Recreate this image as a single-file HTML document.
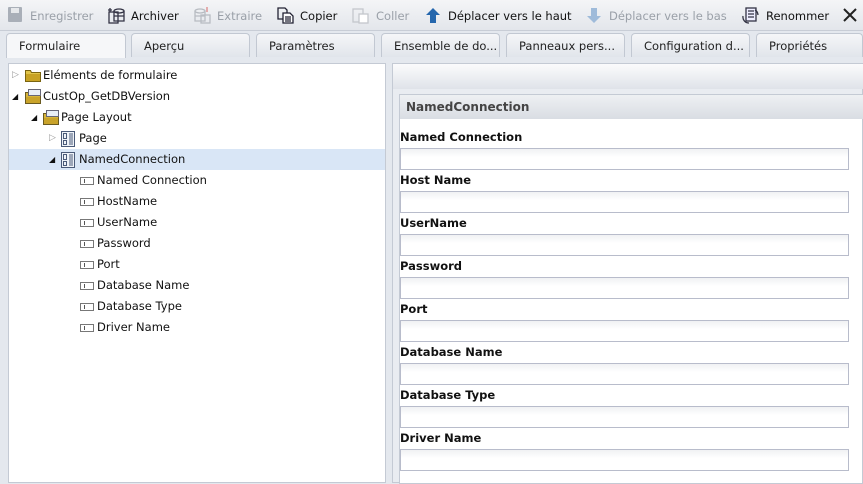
<!DOCTYPE html>
<html><head><style>
*{box-sizing:border-box;margin:0;padding:0}
body{width:863px;height:480px;overflow:hidden;background:#e4e8ee;font-family:"DejaVu Sans","Liberation Sans",sans-serif;font-size:11.5px;color:#111;position:relative}
.a{position:absolute;white-space:nowrap}
.tb{left:0;top:0;width:863px;height:31px;background:linear-gradient(#f4f5f7,#e3e6eb);border-bottom:1px solid #c8cdd6}
.tb span,.tb svg{position:absolute;top:9px}
.tb svg{top:7px}
.dis{color:#9aa0a8}
.tab{position:absolute;top:33px;height:24px;border:1px solid #c2c8d2;border-bottom:none;border-radius:4px 4px 0 0;background:linear-gradient(#f5f6f8,#e1e5eb);padding:5px 0 0 12px;color:#222}
.tab.on{background:#f6f7f9;height:25px}
.tree{left:8px;top:63px;width:378px;height:420px;background:#fff;border:1px solid #c4cad4}
.row{position:absolute;left:0;width:376px;height:21px;line-height:21px}
.row span,.row svg{position:absolute}
.fi{position:absolute;width:14px;height:8px;border:1px solid #777}
.fi:after{content:"";position:absolute;left:3px;top:1px;width:1px;height:4px;background:#555}
.rp{left:392px;top:63px;width:471px;height:420px;background:#e9ecf1;border:1px solid #c4cad4}
.hdr{left:393px;top:64px;width:470px;height:25px;background:linear-gradient(#fbfbfc,#dfe3e9)}
.inner{left:399px;top:94px;width:464px;height:390px;background:#fff;border:1px solid #c4cad4}
.title{left:400px;top:95px;width:463px;height:24px;background:linear-gradient(#eef0f3,#d9dde3);font-weight:bold;color:#444;padding:5px 0 0 6px;font-size:12px}
.lbl{position:absolute;left:400px;font-weight:bold;font-size:11.5px}
.inp{position:absolute;left:400px;width:449px;height:22px;border:1px solid #b8bccb;background:linear-gradient(#f0f1f3,#fff 40%)}
</style></head><body>
<div class="a tb">
<svg style="left:8px" width="14" height="15"><rect x="0" y="0" width="14" height="15" rx="1" fill="#a9afb8"/><rect x="3" y="1" width="8" height="5" fill="#e6e8eb"/></svg>
<span class="dis" style="left:30px">Enregistrer</span>
<svg style="left:108px" width="17" height="17" fill="none" stroke="#334" stroke-width="1.3"><rect x="1" y="5" width="9" height="11"/><ellipse cx="11" cy="4" rx="5" ry="2"/><path d="M6 4v10h10V4M6 9h10M2 1v4M0 3h4" /></svg>
<span style="left:131px">Archiver</span>
<svg style="left:194px" width="17" height="17" fill="none" stroke="#b8bcc2" stroke-width="1.3"><ellipse cx="6" cy="4" rx="5" ry="2"/><path d="M1 4v10h10V4M1 9h10"/><rect x="7" y="8" width="9" height="8"/><path d="M13 0v5" stroke="#d88"/></svg>
<span class="dis" style="left:217px">Extraire</span>
<svg style="left:277px" width="17" height="17" fill="none" stroke="#223" stroke-width="1.3"><path d="M1 1h7l2 2v9H1z"/><path d="M6 6h7l3 3v7H6z" fill="#fff"/><path d="M8 10h6M8 12h6M8 14h6"/></svg>
<span style="left:300px">Copier</span>
<svg style="left:352px" width="17" height="17" fill="none" stroke="#c4c7cc" stroke-width="1.3"><rect x="1" y="2" width="10" height="13"/><rect x="7" y="7" width="9" height="9" fill="#fff"/></svg>
<span class="dis" style="left:376px">Coller</span>
<svg style="left:425px" width="16" height="17"><path d="M8 1L1 8h4v8h6V8h4z" fill="#2466ad"/></svg>
<span style="left:448px">Déplacer vers le haut</span>
<svg style="left:586px" width="16" height="17"><path d="M8 16L1 9h4V1h6v8h4z" fill="#9fbbda"/></svg>
<span class="dis" style="left:609px">Déplacer vers le bas</span>
<svg style="left:742px" width="17" height="17" fill="none" stroke="#334" stroke-width="1.3"><rect x="4" y="1" width="10" height="13" fill="#eef"/><path d="M6 4h6M6 7h6M6 10h6"/><path d="M1 9a6 6 0 0 0 6 7M16 8a6 6 0 0 0-3-5"/></svg>
<span style="left:766px">Renommer</span>
<svg style="left:843px;top:8px" width="14" height="14" stroke="#222" stroke-width="2"><path d="M1 1L13 13M13 1L1 13"/></svg>
</div>
<div class="tab on" style="left:6px;width:120px">Formulaire</div>
<div class="tab" style="left:131px;width:119px">Aperçu</div>
<div class="tab" style="left:256px;width:119px">Paramètres</div>
<div class="tab" style="left:381px;width:119px">Ensemble de do...</div>
<div class="tab" style="left:506px;width:119px">Panneaux pers...</div>
<div class="tab" style="left:631px;width:119px">Configuration d...</div>
<div class="tab" style="left:756px;width:107px">Propriétés</div>
<div class="a tree">
<div class="row" style="top:1px"><span style="left:3px;color:#999;font-size:9px">▷</span><svg style="left:16px;top:4px" width="16" height="13"><path d="M0.5 1.5h5l1 2h9v9H0.5z" fill="#e0c44a" stroke="#7a6410"/><rect x="1" y="5" width="14" height="7" fill="#c8a224"/></svg><span style="left:34px">Eléments de formulaire</span></div>
<div class="row" style="top:22px"><span style="left:3px;font-size:8px">◢</span><svg style="left:16px;top:3px" width="17" height="15"><path d="M0.5 3.5h15v11H0.5z" fill="#d6b43a" stroke="#6a5a20"/><rect x="3.5" y="0.5" width="12" height="6" fill="#e8eef6" stroke="#667"/><rect x="1" y="8" width="14" height="6" fill="#c9a32a"/></svg><span style="left:34px">CustOp_GetDBVersion</span></div>
<div class="row" style="top:43px"><span style="left:22px;font-size:8px">◢</span><svg style="left:34px;top:3px" width="17" height="15"><path d="M0.5 3.5h15v11H0.5z" fill="#d6b43a" stroke="#6a5a20"/><rect x="3.5" y="0.5" width="12" height="6" fill="#e8eef6" stroke="#667"/><rect x="1" y="8" width="14" height="6" fill="#c9a32a"/></svg><span style="left:52px">Page Layout</span></div>
<div class="row" style="top:64px"><span style="left:40px;color:#999;font-size:9px">▷</span><svg style="left:52px;top:3px" width="14" height="16" fill="#eef2f8" stroke="#4a5a78"><rect x="0.5" y="0.5" width="13" height="15"/><rect x="2.5" y="2.5" width="3" height="5"/><rect x="2.5" y="9.5" width="3" height="4"/><path d="M8 3h4M8 5h4M8 7h4M8 9h4M8 11h4M8 13h4"/></svg><span style="left:70px">Page</span></div>
<div class="row" style="top:85px;background:#d9e6f6"><span style="left:40px;font-size:8px">◢</span><svg style="left:52px;top:3px" width="14" height="16" fill="#eef2f8" stroke="#4a5a78"><rect x="0.5" y="0.5" width="13" height="15"/><rect x="2.5" y="2.5" width="3" height="5"/><rect x="2.5" y="9.5" width="3" height="4"/><path d="M8 3h4M8 5h4M8 7h4M8 9h4M8 11h4M8 13h4"/></svg><span style="left:70px">NamedConnection</span></div>
<div class="row" style="top:106px"><span class="fi" style="left:71px;top:7px"></span><span style="left:88px">Named Connection</span></div>
<div class="row" style="top:127px"><span class="fi" style="left:71px;top:7px"></span><span style="left:88px">HostName</span></div>
<div class="row" style="top:148px"><span class="fi" style="left:71px;top:7px"></span><span style="left:88px">UserName</span></div>
<div class="row" style="top:169px"><span class="fi" style="left:71px;top:7px"></span><span style="left:88px">Password</span></div>
<div class="row" style="top:190px"><span class="fi" style="left:71px;top:7px"></span><span style="left:88px">Port</span></div>
<div class="row" style="top:211px"><span class="fi" style="left:71px;top:7px"></span><span style="left:88px">Database Name</span></div>
<div class="row" style="top:232px"><span class="fi" style="left:71px;top:7px"></span><span style="left:88px">Database Type</span></div>
<div class="row" style="top:253px"><span class="fi" style="left:71px;top:7px"></span><span style="left:88px">Driver Name</span></div>
</div>
<div class="a rp"></div>
<div class="a hdr"></div>
<div class="a inner"></div>
<div class="a title">NamedConnection</div>
<div class="lbl" style="top:130px">Named Connection</div><div class="inp" style="top:148px"></div>
<div class="lbl" style="top:173px">Host Name</div><div class="inp" style="top:191px"></div>
<div class="lbl" style="top:216px">UserName</div><div class="inp" style="top:234px"></div>
<div class="lbl" style="top:259px">Password</div><div class="inp" style="top:277px"></div>
<div class="lbl" style="top:302px">Port</div><div class="inp" style="top:320px"></div>
<div class="lbl" style="top:345px">Database Name</div><div class="inp" style="top:363px"></div>
<div class="lbl" style="top:388px">Database Type</div><div class="inp" style="top:406px"></div>
<div class="lbl" style="top:431px">Driver Name</div><div class="inp" style="top:449px"></div>
</body></html>
